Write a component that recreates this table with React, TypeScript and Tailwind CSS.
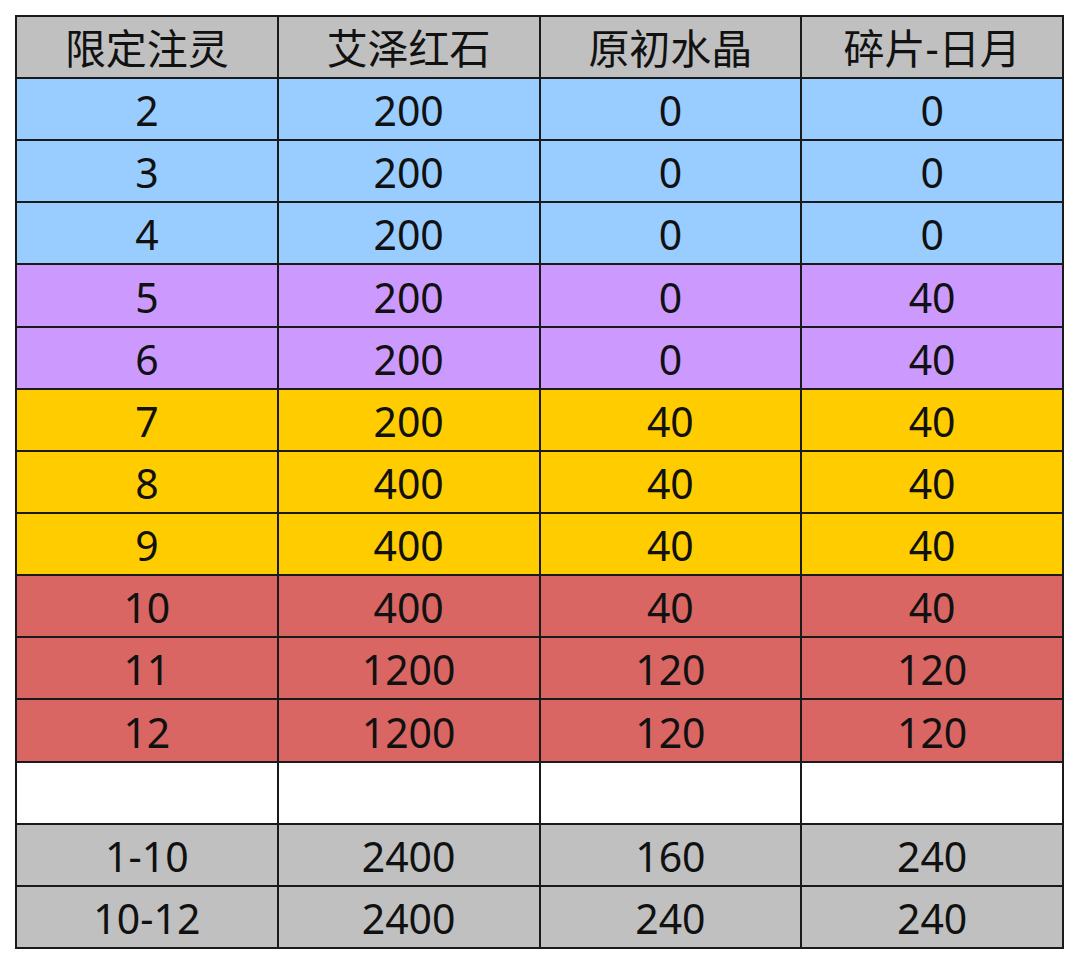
const header = ["限定注灵", "艾泽红石", "原初水晶", "碎片-日月"];

const rows: { cells: string[]; bg: string }[] = [
  { cells: ["2", "200", "0", "0"], bg: "bg-[#99ccff]" },
  { cells: ["3", "200", "0", "0"], bg: "bg-[#99ccff]" },
  { cells: ["4", "200", "0", "0"], bg: "bg-[#99ccff]" },
  { cells: ["5", "200", "0", "40"], bg: "bg-[#cc99ff]" },
  { cells: ["6", "200", "0", "40"], bg: "bg-[#cc99ff]" },
  { cells: ["7", "200", "40", "40"], bg: "bg-[#ffcc00]" },
  { cells: ["8", "400", "40", "40"], bg: "bg-[#ffcc00]" },
  { cells: ["9", "400", "40", "40"], bg: "bg-[#ffcc00]" },
  { cells: ["10", "400", "40", "40"], bg: "bg-[#d96662]" },
  { cells: ["11", "1200", "120", "120"], bg: "bg-[#d96662]" },
  { cells: ["12", "1200", "120", "120"], bg: "bg-[#d96662]" },
  { cells: ["", "", "", ""], bg: "bg-white" },
  { cells: ["1-10", "2400", "160", "240"], bg: "bg-[#c0c0c0]" },
  { cells: ["10-12", "2400", "240", "240"], bg: "bg-[#c0c0c0]" },
];

export default function App() {
  return (
    <div className="w-[1080px] h-[964px] bg-white pl-[15px] pt-[15px]">
      <table
        className="w-[1049px] border-collapse border-2 border-[#1a1a1a] text-[#111] text-[41px] leading-none"
        style={{ fontFamily: '"Noto Sans", "Noto Sans CJK SC", sans-serif' }}
      >
        <thead>
          <tr className="bg-[#c0c0c0] h-[62px]">
            {header.map((h) => (
              <th key={h} className="w-1/4 border-2 border-[#1a1a1a] font-normal text-center p-0 pt-[2px]">
                {h}
              </th>
            ))}
          </tr>
        </thead>
        <tbody>
          {rows.map((r, i) => (
            <tr key={i} className={`${r.bg} ${i % 7 === 3 ? "h-[63px]" : "h-[62px]"}`}>
              {r.cells.map((c, j) => (
                <td key={j} className="border-2 border-[#1a1a1a] text-center p-0 pt-[3px]">
                  {c}
                </td>
              ))}
            </tr>
          ))}
        </tbody>
      </table>
    </div>
  );
}
